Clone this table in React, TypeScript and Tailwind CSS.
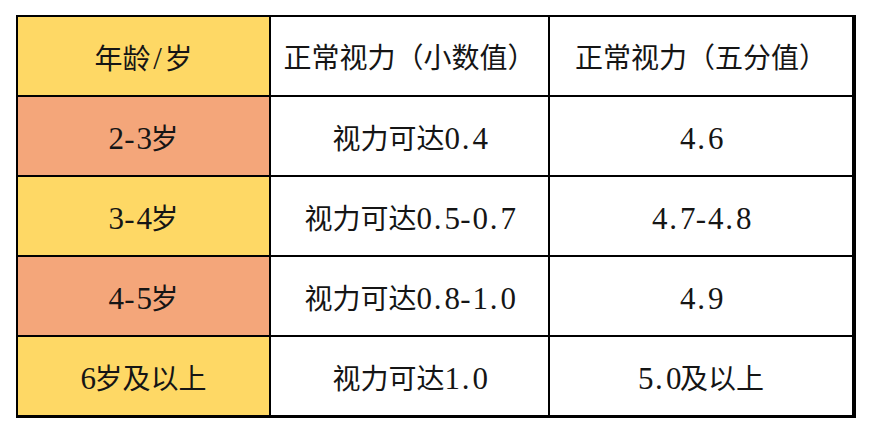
import React from "react";

type Row = { age: string; dec: string; five: string; bg: string };

const rows: Row[] = [
  { age: "2-3岁", dec: "视力可达0.4", five: "4.6", bg: "bg-[#f4a67a]" },
  { age: "3-4岁", dec: "视力可达0.5-0.7", five: "4.7-4.8", bg: "bg-[#fed865]" },
  { age: "4-5岁", dec: "视力可达0.8-1.0", five: "4.9", bg: "bg-[#f4a67a]" },
  { age: "6岁及以上", dec: "视力可达1.0", five: "5.0及以上", bg: "bg-[#fed865]" },
];

// half-width characters sit in fixed half-em cells, like the original font
function Txt({ s }: { s: string }) {
  return (
    <span className="whitespace-nowrap">
      {s.split("").map((c, i) =>
        c.charCodeAt(0) < 128 ? (
          <span key={i} className="inline-block w-[14px] text-center text-[31px]">
            {c}
          </span>
        ) : (
          <React.Fragment key={i}>{c}</React.Fragment>
        )
      )}
    </span>
  );
}

function Cell({ text, bg, right, bottom }: { text: string; bg?: string; right?: boolean; bottom?: boolean }) {
  return (
    <div
      className={`flex items-center justify-center pt-[5px] ${bg ?? "bg-white"} ${right ? "border-r-2 border-black" : ""} ${
        bottom ? "border-b-2 border-black" : ""
      }`}
    >
      <Txt s={text} />
    </div>
  );
}

export default function App() {
  return (
    <div className="w-[870px] h-[434px] bg-white pt-[15px] pl-[16px]">
      <div
        className="w-[840px] grid grid-cols-[253px_279px_302px] grid-rows-[80px_80px_80px_80px_78px] border-l-2 border-t-2 border-r-4 border-b-[3px] border-black text-[28px] leading-none text-[#151515]"
        style={{ fontFamily: '"Liberation Serif", "Noto Sans CJK SC", serif' }}
      >
        <Cell text="年龄/岁" bg="bg-[#fed865]" right bottom />
        <Cell text="正常视力（小数值）" right bottom />
        <Cell text="正常视力（五分值）" bottom />
        {rows.map((r, i) => {
          const last = i === rows.length - 1;
          return (
            <React.Fragment key={r.age}>
              <Cell text={r.age} bg={r.bg} right bottom={!last} />
              <Cell text={r.dec} right bottom={!last} />
              <Cell text={r.five} bottom={!last} />
            </React.Fragment>
          );
        })}
      </div>
    </div>
  );
}
